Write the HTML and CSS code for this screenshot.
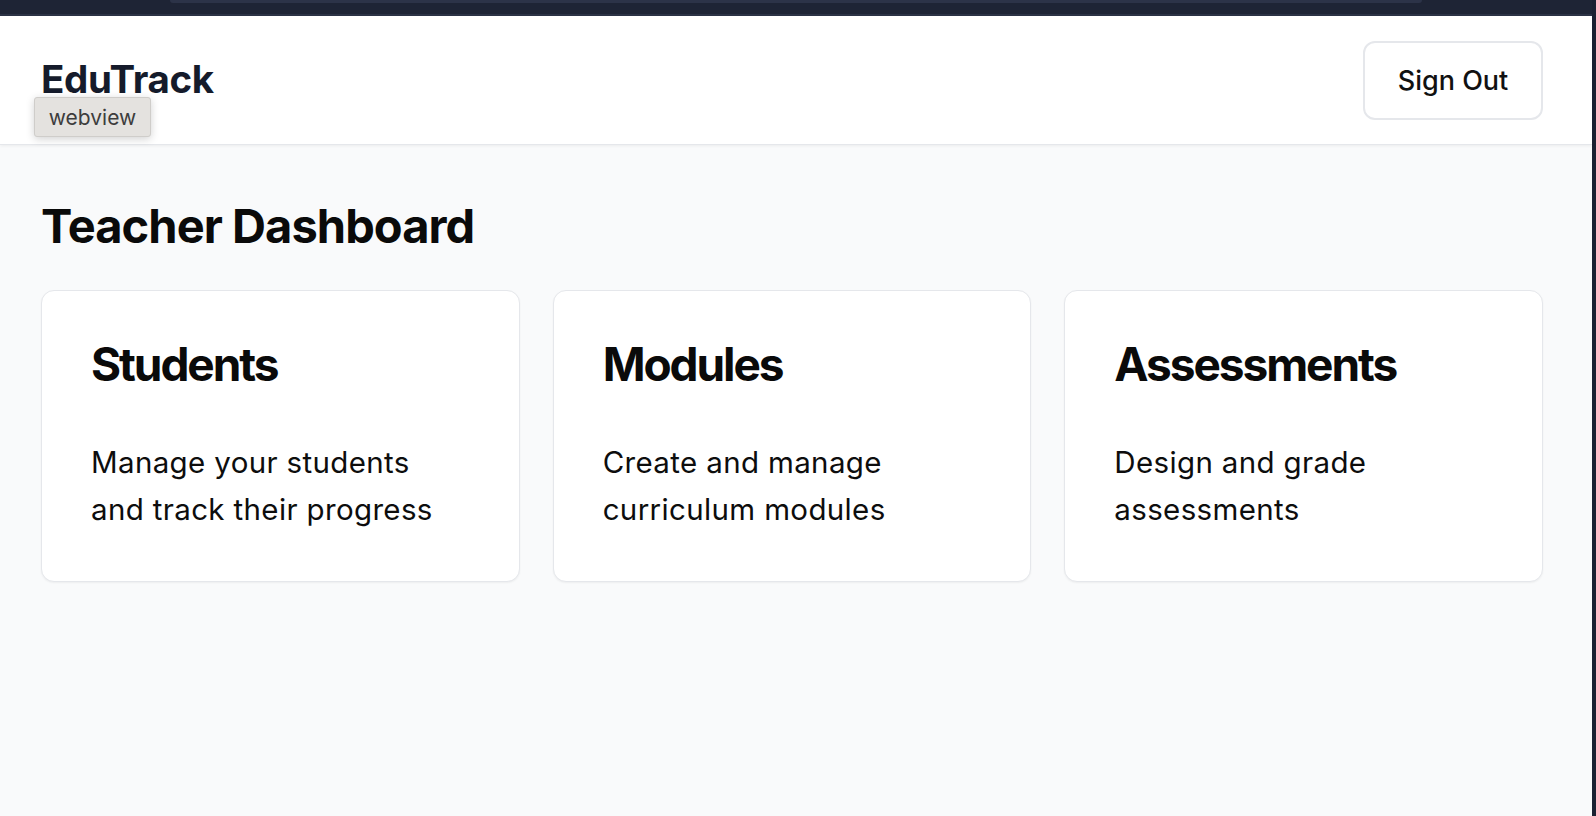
FILE: index.html
```html
<!DOCTYPE html>
<html lang="en">
<head>
<meta charset="utf-8">
<title>EduTrack</title>
<link rel="stylesheet" href="styles.css">
</head>
<body>
<div class="window">
  <div class="viewport">
    <div class="topbar"><div class="topbar-field"></div></div>
    <header class="header">
      <div class="logo">EduTrack</div>
      <button class="signout">Sign Out</button>
      <div class="tooltip">webview</div>
    </header>
    <main class="main">
      <h1 class="page-title">Teacher Dashboard</h1>
      <div class="cards">
        <section class="card">
          <h2 class="card-title">Students</h2>
          <p class="card-text">Manage your students and track their progress</p>
        </section>
        <section class="card">
          <h2 class="card-title">Modules</h2>
          <p class="card-text">Create and manage curriculum modules</p>
        </section>
        <section class="card">
          <h2 class="card-title">Assessments</h2>
          <p class="card-text">Design and grade assessments</p>
        </section>
      </div>
    </main>
  </div>
  <div class="edge"></div>
</div>
</body>
</html>
```
FILE: styles.css
```css
* { box-sizing: border-box; }
html, body { margin: 0; padding: 0; height: 100%; }
body {
  font-family: Inter, "Noto Sans", sans-serif;
  background: #f9fafb;
  overflow: hidden;
}
.window {
  display: flex;
  height: 816px;
  width: 1596px;
}
.viewport {
  flex: 1;
  display: flex;
  flex-direction: column;
  position: relative;
  background: #f9fafb;
}
.edge {
  width: 4px;
  background: #1b2132;
}
.topbar {
  height: 16px;
  background: #1e2435;
  border-bottom: 2px solid #2b3245;
  padding-left: 170px;
  padding-right: 170px;
}
.topbar-field {
  height: 3px;
  background: #2c3348;
  border-radius: 0 0 6px 6px;
}
.header {
  position: relative;
  height: 129px;
  background: #ffffff;
  border-bottom: 1px solid #e5e7eb;
  box-shadow: 0 1px 3px rgba(0,0,0,0.06);
  display: flex;
  align-items: center;
  justify-content: space-between;
  padding: 0 49px 0 41px;
}
.logo {
  font-size: 38.5px;
  font-weight: 700;
  color: #151b2b;
  letter-spacing: -0.01em;
  margin-top: -2px;
}
.signout {
  width: 180px;
  height: 79px;
  background: #ffffff;
  border: 2px solid #e5e7eb;
  border-radius: 12px;
  font-family: Inter, "Noto Sans", sans-serif;
  font-size: 27px;
  font-weight: 500;
  color: #111111;
  padding: 0;
}
.tooltip {
  position: absolute;
  left: 34px;
  top: 81px;
  width: 117px;
  height: 40px;
  background: #e4e2df;
  border: 1px solid #cfcdca;
  border-radius: 3px;
  box-shadow: 0 2px 8px rgba(0,0,0,0.18);
  font-size: 21px;
  color: #3d3d3d;
  display: flex;
  align-items: center;
  justify-content: center;
}
.main {
  flex: 1;
  padding: 53px 49px 0 41px;
}
.page-title {
  margin: 0 0 36px 0;
  font-size: 47px;
  line-height: 56px;
  font-weight: 700;
  letter-spacing: -0.02em;
  color: #0a0a0a;
}
.cards {
  display: grid;
  grid-template-columns: repeat(3, 1fr);
  gap: 33px;
}
.card {
  background: #ffffff;
  border: 1px solid #e5e7eb;
  border-radius: 13px;
  box-shadow: 0 1px 2px rgba(0,0,0,0.05);
  padding: 48px 56px 48px 49px;
}
.card-title {
  margin: 0 0 50px 0;
  font-size: 46px;
  line-height: 50px;
  font-weight: 700;
  letter-spacing: -0.045em;
  color: #0a0a0a;
}
.card-text {
  margin: 0;
  font-size: 29.5px;
  line-height: 47px;
  font-weight: 400;
  letter-spacing: 0.012em;
  color: #0d0d0d;
}
```
